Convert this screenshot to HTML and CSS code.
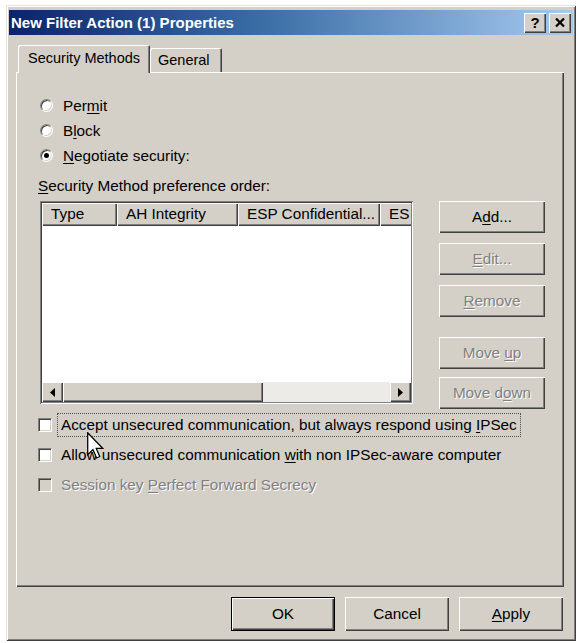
FILE: index.html
```html
<!DOCTYPE html>
<html>
<head>
<meta charset="utf-8">
<title>New Filter Action (1) Properties</title>
<link rel="stylesheet" href="styles.css">
</head>
<body>
<div class="window">
  <div class="titlebar">
    <span class="title">New Filter Action (1) Properties</span>
    <div class="caption-btns">
      <div class="cap cap-help">?</div>
      <div class="cap">
        <svg width="10" height="9" viewBox="0 0 10 9"><path d="M1 0.5 L9 8.5 M9 0.5 L1 8.5" stroke="#000" stroke-width="2.2" fill="none"/></svg>
      </div>
    </div>
  </div>

  <div class="tabs">
    <div class="tab active"><span>Security Methods</span></div>
    <div class="tab"><span>General</span></div>
  </div>

  <div class="panel">
    <div class="radios">
      <label class="radio-row"><span class="radio"></span><span>Per<u>m</u>it</span></label>
      <label class="radio-row"><span class="radio"></span><span>B<u>l</u>ock</span></label>
      <label class="radio-row"><span class="radio checked"></span><span><u>N</u>egotiate security:</span></label>
    </div>

    <div class="group-label"><u>S</u>ecurity Method preference order:</div>

    <div class="list-row">
      <div class="listview">
        <div class="lv-head">
          <div class="col col-type">Type</div>
          <div class="col col-ah">AH Integrity</div>
          <div class="col col-esp">ESP Confidential...</div>
          <div class="col col-es">ES</div>
        </div>
        <div class="lv-body"></div>
        <div class="hscroll">
          <div class="sb-btn"><svg width="5" height="9" viewBox="0 0 5 9"><path d="M5 0 L0 4.5 L5 9 Z" fill="#000"/></svg></div>
          <div class="sb-thumb"></div>
          <div class="sb-track"></div>
          <div class="sb-btn"><svg width="5" height="9" viewBox="0 0 5 9"><path d="M0 0 L5 4.5 L0 9 Z" fill="#000"/></svg></div>
        </div>
      </div>

      <div class="side-btns">
        <div class="btn side"><span>A<u>d</u>d...</span></div>
        <div class="btn side disabled"><span><u>E</u>dit...</span></div>
        <div class="btn side disabled"><span><u>R</u>emove</span></div>
        <div class="btn side disabled gap-before"><span>Move <u>u</u>p</span></div>
        <div class="btn side disabled tight"><span>Move d<u>o</u>wn</span></div>
      </div>
    </div>

    <div class="checks">
      <label class="check-row"><span class="check"></span><span class="check-text focus">Accept unsecured communication, but always respond using <u>I</u>PSec</span></label>
      <label class="check-row"><span class="check"></span><span class="check-text">Allow unsecured communication <u>w</u>ith non IPSec-aware computer</span></label>
      <label class="check-row disabled"><span class="check"></span><span class="check-text">Session key <u>P</u>erfect Forward Secrecy</span></label>
    </div>
  </div>

  <div class="footer">
    <div class="btn foot default"><span>OK</span></div>
    <div class="btn foot"><span>Cancel</span></div>
    <div class="btn foot"><span><u>A</u>pply</span></div>
  </div>

  <svg class="pointer" width="17" height="27" viewBox="0 0 12 19">
    <path d="M0.5 0.5 L0.5 16 L4.2 12.4 L6.8 18.3 L9 17.3 L6.5 11.6 L11.2 11.6 Z" fill="#fff" stroke="#000" stroke-width="0.9" stroke-linejoin="miter"/>
  </svg>
</div>
</body>
</html>
```

FILE: styles.css
```css
* {
  box-sizing: border-box;
}

body {
  margin: 0;
  background: #ffffff;
  font-family: "Liberation Sans", Arial, sans-serif;
  font-size: 15.3px;
  color: #000;
}

u {
  text-decoration: underline;
  text-underline-offset: 2px;
}

/* dialog frame */
.window {
  position: relative;
  margin: 5px 0 0 6px;
  width: 570px;
  height: 636px;
  padding: 5px 3px 0 3px;
  background: #d4d0c8;
  box-shadow:
    inset 1px 1px #e6e3dc,
    inset -1px -1px #404040,
    inset 2px 2px #ffffff,
    inset -2px -2px #808080;
}

.titlebar {
  height: 25px;
  display: flex;
  align-items: center;
  justify-content: space-between;
  padding: 0 2px 0 2px;
  background: linear-gradient(to right, #0a246a 0%, #3a6ea5 45%, #a6caf0 100%);
}

.title {
  color: #fff;
  font-weight: bold;
  font-size: 15px;
}

.caption-btns {
  display: flex;
  gap: 3px;
}

.cap {
  width: 22px;
  height: 20px;
  display: flex;
  align-items: center;
  justify-content: center;
  background: #d4d0c8;
  box-shadow:
    inset 1px 1px #ffffff,
    inset -1px -1px #404040,
    inset -2px -2px #808080;
}

.cap-help {
  font-weight: bold;
  font-size: 15px;
  line-height: 1;
}

/* tab strip */
.tabs {
  position: relative;
  z-index: 2;
  display: flex;
  align-items: flex-end;
  height: 27px;
  margin: 10px 0 0 9px;
  font-size: 14.5px;
}

.tab {
  height: 24px;
  display: flex;
  align-items: center;
  white-space: nowrap;
  background: #d4d0c8;
  border-top-left-radius: 2px;
  border-top-right-radius: 2px;
  box-shadow:
    inset 1px 1px #ffffff,
    inset -1px 0 #404040,
    inset -2px 0 #808080;
}

.tab.active {
  height: 28px;
  width: 132px;
  margin-bottom: -1px;
  padding: 0 0 3px 10px;
}

.tab:not(.active) {
  width: 72px;
  padding-left: 8px;
}

/* property page */
.panel {
  margin-left: 7px;
  width: 548px;
  height: 515px;
  padding: 21px 0 0 22px;
  background: #d4d0c8;
  box-shadow:
    inset 1px 1px #ffffff,
    inset -1px -1px #404040,
    inset -2px -2px #808080;
}

.radios {
  display: flex;
  flex-direction: column;
  margin-left: 2px;
}

.radio-row {
  height: 25px;
  display: flex;
  align-items: center;
  gap: 10px;
}

.radio {
  width: 13px;
  height: 13px;
  border-radius: 50%;
  background: #ffffff;
  border: 1px solid;
  border-color: #808080 #ffffff #ffffff #808080;
  box-shadow: inset 1px 1px #404040, inset -1px -1px #d4d0c8;
  display: flex;
  align-items: center;
  justify-content: center;
}

.radio.checked::after {
  content: "";
  width: 5px;
  height: 5px;
  border-radius: 50%;
  background: #000;
}

.group-label {
  height: 18px;
  line-height: 18px;
  margin: 9px 0 6px;
}

.list-row {
  display: flex;
  align-items: flex-start;
  gap: 26px;
  margin-left: 2px;
}

.listview {
  width: 373px;
  height: 203px;
  padding: 2px;
  display: flex;
  flex-direction: column;
  background: #ffffff;
  box-shadow:
    inset 1px 1px #808080,
    inset -1px -1px #ffffff,
    inset 2px 2px #404040,
    inset -2px -2px #808080;
}

.lv-head {
  display: flex;
  height: 23px;
  overflow: hidden;
  flex: none;
}

.col {
  flex: none;
  height: 23px;
  line-height: 22px;
  padding-left: 9px;
  white-space: nowrap;
  overflow: hidden;
  background: #d4d0c8;
  box-shadow:
    inset 1px 1px #ffffff,
    inset -1px -1px #404040,
    inset -2px -2px #808080;
}

.col-type { width: 75px; }
.col-ah { width: 121px; }
.col-esp { width: 142px; }
.col-es { width: 40px; }

.lv-body {
  flex: 1;
  background: #ffffff;
}

.hscroll {
  flex: none;
  display: flex;
  height: 20px;
  background: #ecebe7;
}

.sb-btn {
  width: 21px;
  height: 20px;
  display: flex;
  align-items: center;
  justify-content: center;
  background: #d4d0c8;
  box-shadow:
    inset 1px 1px #ffffff,
    inset -1px -1px #404040,
    inset -2px -2px #808080;
}

.sb-thumb {
  width: 200px;
  height: 20px;
  background: #d4d0c8;
  box-shadow:
    inset 1px 1px #ffffff,
    inset -1px -1px #404040,
    inset -2px -2px #808080;
}

.sb-track {
  flex: 1;
}

/* push buttons */
.btn {
  display: flex;
  align-items: center;
  justify-content: center;
  white-space: nowrap;
  background: #d4d0c8;
  box-shadow:
    inset 1px 1px #ffffff,
    inset -1px -1px #404040,
    inset -2px -2px #808080;
}

.btn.disabled {
  color: #808080;
  text-shadow: 1px 1px #ffffff;
}

.side-btns {
  display: flex;
  flex-direction: column;
  gap: 10px;
}

.btn.side {
  width: 106px;
  height: 32px;
}

.btn.side.gap-before {
  margin-top: 10px;
}

.btn.side.tight {
  margin-top: -2px;
}

/* option checkboxes */
.checks {
  display: flex;
  flex-direction: column;
  gap: 6px;
  margin-top: 4px;
}

.check-row {
  height: 24px;
  display: flex;
  align-items: center;
  gap: 5px;
}

.check {
  width: 14px;
  height: 14px;
  flex: none;
  background: #ffffff;
  border: 1px solid;
  border-color: #808080 #ffffff #ffffff #808080;
  box-shadow: inset 1px 1px #404040, inset -1px -1px #d4d0c8;
}

.check-text {
  padding: 2px 3px;
  line-height: 18px;
  white-space: nowrap;
  border: 1px dotted transparent;
}

.check-text.focus {
  border-color: #505050;
}

.check-row.disabled .check {
  background: #d4d0c8;
}

.check-row.disabled .check-text {
  color: #808080;
  text-shadow: 1px 1px #ffffff;
}

/* dialog buttons */
.footer {
  display: flex;
  justify-content: flex-end;
  gap: 10px;
  margin: 10px 0 0 7px;
  width: 548px;
  padding-right: 1px;
}

.btn.foot {
  width: 104px;
  height: 34px;
}

.btn.default {
  box-shadow:
    inset 0 0 0 1px #000,
    inset 2px 2px #ffffff,
    inset -2px -2px #404040,
    inset -3px -3px #808080;
}

/* mouse pointer resting over the first option */
.pointer {
  position: absolute;
  left: 81px;
  top: 427px;
}
```
